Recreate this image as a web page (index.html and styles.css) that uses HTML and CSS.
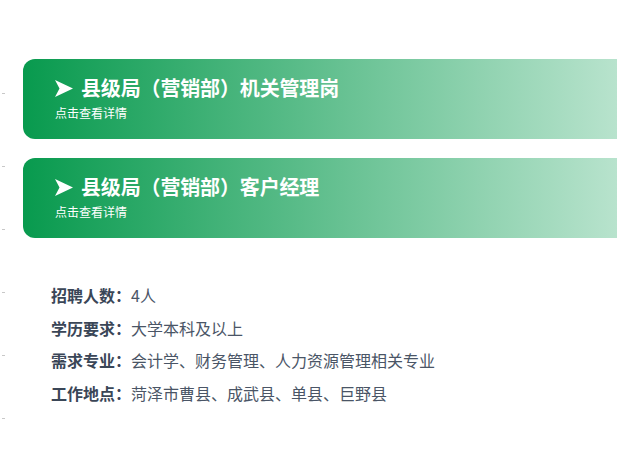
FILE: index.html
```html
<!DOCTYPE html>
<html lang="zh-CN">
<head>
<meta charset="utf-8">
<title>岗位信息</title>
<link rel="stylesheet" href="styles.css">
</head>
<body>
<div class="page">
  <div class="card">
    <div class="card-title">
      <svg class="arrow" width="18" height="17" viewBox="0 0 18 17"><path d="M0 0 L18 8.5 L0 17 L4.5 8.5 Z" fill="#fff"/></svg>
      <span>县级局（营销部）机关管理岗</span>
    </div>
    <div class="card-sub">点击查看详情</div>
  </div>
  <div class="card">
    <div class="card-title">
      <svg class="arrow" width="18" height="17" viewBox="0 0 18 17"><path d="M0 0 L18 8.5 L0 17 L4.5 8.5 Z" fill="#fff"/></svg>
      <span>县级局（营销部）客户经理</span>
    </div>
    <div class="card-sub">点击查看详情</div>
  </div>
  <div class="info">
    <div class="row"><span class="label">招聘人数：</span><span class="value">4人</span></div>
    <div class="row"><span class="label">学历要求：</span><span class="value">大学本科及以上</span></div>
    <div class="row"><span class="label">需求专业：</span><span class="value">会计学、财务管理、人力资源管理相关专业</span></div>
    <div class="row"><span class="label">工作地点：</span><span class="value">菏泽市曹县、成武县、单县、巨野县</span></div>
  </div>
</div>
</body>
</html>
```
FILE: styles.css
```css
html, body {
  margin: 0;
  padding: 0;
  background: #fff;
  overflow: hidden;
}
body {
  font-family: "Noto Sans CJK SC", "Noto Sans", sans-serif;
  width: 617px;
  height: 453px;
  background-color: #fff;
  background-image:
    linear-gradient(#c8c8c8, #c8c8c8),
    linear-gradient(#c8c8c8, #c8c8c8),
    linear-gradient(#c8c8c8, #c8c8c8),
    linear-gradient(#c8c8c8, #c8c8c8),
    linear-gradient(#c8c8c8, #c8c8c8),
    linear-gradient(#c8c8c8, #c8c8c8);
  background-repeat: no-repeat;
  background-size: 3px 1px;
  background-position: 2px 93px, 2px 166px, 2px 229px, 2px 292px, 2px 355px, 2px 418px;
}
.page {
  padding-top: 59px;
  display: flex;
  flex-direction: column;
}
.card {
  margin-left: 23px;
  height: 80px;
  box-sizing: border-box;
  border-radius: 12px 0 0 12px;
  background: linear-gradient(to right, #089a4e 0%, #b8e3cd 100%);
  padding: 18px 0 0 32px;
  color: #fff;
  margin-bottom: 19px;
}
.card-title {
  display: flex;
  align-items: center;
  gap: 8px;
  font-size: 20px;
  font-weight: 700;
  line-height: 22px;
  height: 22px;
  letter-spacing: -0.15px;
}
.arrow {
  display: block;
  flex: none;
}
.card-sub {
  margin-top: 6px;
  font-size: 12px;
  line-height: 16px;
}
.info {
  margin-top: 22px;
  padding-left: 51px;
  font-size: 16px;
  line-height: 32.5px;
}
.label {
  font-weight: 700;
  color: #3a4657;
}
.value {
  color: #4a5566;
}
```
